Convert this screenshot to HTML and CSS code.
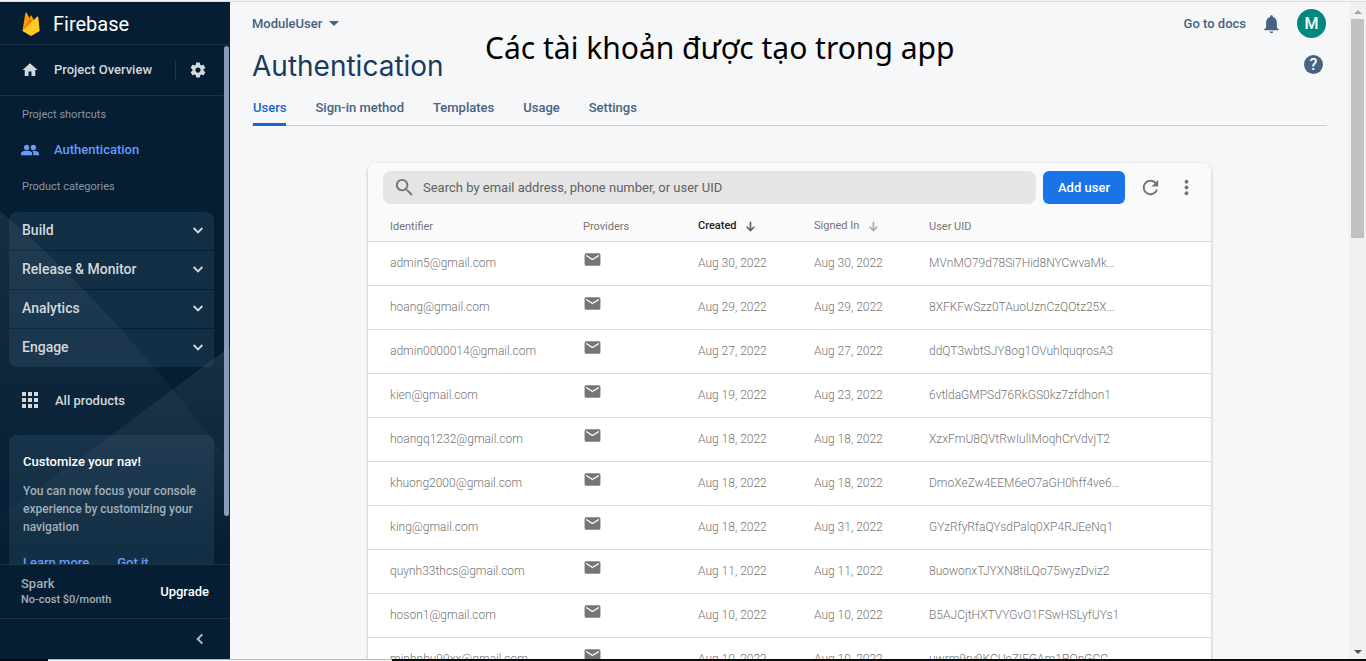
FILE: index.html
```html
<!DOCTYPE html>
<html lang="en">
<head>
<meta charset="utf-8">
<title>ModuleUser - Authentication - Firebase console</title>
<link rel="stylesheet" href="styles.css">
</head>

<body>

<!-- Icons -->
<svg class="sprite" aria-hidden="true">
    <symbol id="mail" viewBox="0 0 24 24"><path d="M20 4H4c-1.100 0-1.990.900-1.990 2L2 18c0 1.100.900 2 2 2h16c1.100 0 2-.900 2-2V6c0-1.100-.900-2-2-2zm0 4l-8 5-8-5V6l8 5 8-5v2z"/></symbol>
    <symbol id="chevron" viewBox="0 0 24 24"><path d="M5.500 9l6.500 6.500L18.500 9" fill="none" stroke="currentColor" stroke-width="2.800"/></symbol>
    <symbol id="arrow" viewBox="0 0 24 24"><path d="M12 3v16M5 12.500l7 7 7-7" fill="none" stroke="currentColor" stroke-width="3"/></symbol>
</svg>

<div class="screen">
<div class="window">

<aside class="sidebar">
    <svg class="shapes" viewBox="0 0 230 657" preserveAspectRatio="none" aria-hidden="true">
        <defs>
            <linearGradient id="fade" gradientUnits="userSpaceOnUse" x1="0" y1="210" x2="0" y2="550">
                <stop offset="0" stop-color="#fff" stop-opacity=".07"/>
                <stop offset="1" stop-color="#fff" stop-opacity="0"/>
            </linearGradient>
            <linearGradient id="fade2" gradientUnits="userSpaceOnUse" x1="0" y1="350" x2="0" y2="550">
                <stop offset="0" stop-color="#fff" stop-opacity=".08"/>
                <stop offset="1" stop-color="#fff" stop-opacity="0"/>
            </linearGradient>
        </defs>
        <path d="M0 209L43 247L82 286L120 326L172 386L230 460V560H0z" fill="url(#fade)"/>
        <path d="M230 345L118 428L0 515V560H230z" fill="url(#fade2)"/>
    </svg>

    <a class="brand" href="#">
        <svg class="flame" viewBox="0 0 18 24">
            <path d="M.5 19L3.400 1c.1-.6.900-.7 1.200-.2L7.500 6 8.700 3.800c.2-.4.800-.4 1 0L17 19z" fill="#ffa000"/>
            <path d="M.5 19L10.400 9 7.500 6z" fill="#f57c00"/>
            <path d="M.5 19L15.200 4.600c.4-.4 1-.2 1.100.4L17.700 19l-7.700 4.500c-.6.300-1.400.300-2 0z" fill="#ffca28"/>
        </svg>
        <span>Firebase</span>
    </a>

    <div class="nav-scroll">
        <div class="overview">
            <a class="nav-link" href="#">
                <svg class="icon" viewBox="0 0 24 24"><path d="M10 20v-6h4v6h5v-8h3L12 3 2 12h3v8z"/></svg>
                <span>Project Overview</span>
            </a>
            <button class="settings" aria-label="Project settings">
                <svg class="icon" viewBox="0 0 24 24"><path d="M19.430 12.980c.040-.320.070-.640.070-.980s-.030-.660-.070-.980l2.110-1.650c.190-.150.240-.420.120-.640l-2-3.460c-.120-.220-.390-.300-.610-.220l-2.490 1c-.520-.400-1.080-.730-1.690-.980l-.380-2.650C14.460 2.180 14.250 2 14 2h-4c-.250 0-.460.180-.490.420l-.380 2.650c-.610.250-1.170.590-1.690.980l-2.490-1c-.230-.090-.490 0-.610.220l-2 3.460c-.130.220-.070.490.120.640l2.110 1.650c-.040.320-.070.650-.070.980s.030.660.070.980l-2.110 1.650c-.190.150-.240.420-.120.640l2 3.460c.120.220.390.300.610.220l2.490-1c.520.400 1.080.730 1.690.980l.380 2.650c.030.240.240.420.490.420h4c.250 0 .460-.180.490-.420l.380-2.650c.610-.250 1.170-.590 1.690-.980l2.490 1c.230.090.490 0 .610-.220l2-3.460c.120-.220.070-.490-.120-.640zM12 15.500c-1.930 0-3.500-1.570-3.500-3.500s1.570-3.500 3.500-3.500 3.500 1.570 3.500 3.500-1.570 3.500-3.500 3.500z"/></svg>
            </button>
        </div>

        <p class="nav-label">Project shortcuts</p>
        <a class="nav-link active" href="#">
            <svg class="icon" viewBox="0 0 24 24"><circle cx="7.500" cy="8.500" r="3.500"/><circle cx="16.500" cy="8.500" r="3.500"/><path d="M0 19v-2.500C0 14 5 13 7.500 13s7.500 1 7.500 3.500V19zM16.500 19v-2.500c0-1.400-.700-2.500-1.700-3.300.6-.1 1.200-.2 1.700-.2 2.500 0 7.500 1 7.500 3.500V19z"/></svg>
            <span>Authentication</span>
        </a>
        <p class="nav-label">Product categories</p>

        <div class="categories">
            <button>Build <svg class="icon"><use href="#chevron"/></svg></button>
            <button>Release &amp; Monitor <svg class="icon"><use href="#chevron"/></svg></button>
            <button>Analytics <svg class="icon"><use href="#chevron"/></svg></button>
            <button>Engage <svg class="icon"><use href="#chevron"/></svg></button>
        </div>

        <a class="nav-link products" href="#">
            <svg class="icon" viewBox="0 0 16 16"><path d="M0 0h4v4H0zM6 0h4v4H6zM12 0h4v4h-4zM0 6h4v4H0zM6 6h4v4H6zM12 6h4v4h-4zM0 12h4v4H0zM6 12h4v4H6zM12 12h4v4h-4z"/></svg>
            <span>All products</span>
        </a>

        <div class="promo">
            <h2>Customize your nav!</h2>
            <p>You can now focus your console experience by customizing your navigation</p>
            <div class="promo-links">
                <a href="#">Learn more</a>
                <a href="#">Got it</a>
            </div>
        </div>
        <div class="nav-thumb"></div>
    </div>

    <div class="plan">
        <div>
            <p class="plan-name">Spark</p>
            <p class="plan-cost">No-cost $0/month</p>
        </div>
        <a href="#">Upgrade</a>
    </div>
    <div class="collapse">
        <button aria-label="Collapse menu"><svg class="icon" viewBox="0 0 24 24"><path d="M15.500 5L8.500 12l7 7" fill="none" stroke="currentColor" stroke-width="3"/></svg></button>
    </div>
</aside>

<main class="main">
    <header class="topbar">
        <button class="project">ModuleUser <span class="caret"></span></button>
        <div class="tools">
            <a href="#">Go to docs</a>
            <button aria-label="Notifications"><svg class="bell" viewBox="0 0 16 20"><path d="M8 20c1.100 0 2-.8 2-1.800H6c0 1 .9 1.800 2 1.800zM14 14V8.500c0-3-1.700-5.500-4.500-6.200v-.6a1.500 1.500 0 0 0-3 0v.6C3.700 3 2 5.500 2 8.500V14l-2 2v1h16v-1z"/></svg></button>
            <button class="avatar">M</button>
        </div>
    </header>
    <div class="heading">
        <h1>Authentication</h1>
        <button class="help" aria-label="Help">?</button>
    </div>
    <p class="note">Các tài khoản được tạo trong app</p>

    <nav class="tabs">
        <a class="current" href="#">Users</a>
        <a href="#">Sign-in method</a>
        <a href="#">Templates</a>
        <a href="#">Usage</a>
        <a href="#">Settings</a>
    </nav>

    <section class="card">
        <div class="actions">
            <label class="search">
                <svg viewBox="0 0 24 24"><path d="M15.500 14h-.790l-.280-.270C15.410 12.590 16 11.110 16 9.500 16 5.910 13.090 3 9.500 3S3 5.910 3 9.500 5.910 16 9.500 16c1.610 0 3.090-.590 4.230-1.570l.270.280v.790l5 4.990L20.490 19l-4.990-5zm-6 0C7.010 14 5 11.990 5 9.500S7.010 5 9.500 5 14 7.010 14 9.500 11.990 14 9.500 14z"/></svg>
                <input type="text" aria-label="Search users" placeholder="Search by email address, phone number, or user UID">
            </label>
            <button class="add">Add user</button>
            <button class="tool" aria-label="Refresh"><svg viewBox="0 0 24 24"><path d="M17.650 6.350C16.200 4.900 14.210 4 12 4c-4.420 0-7.990 3.580-7.990 8s3.570 8 7.990 8c3.730 0 6.840-2.550 7.730-6h-2.080c-.820 2.330-3.040 4-5.650 4-3.310 0-6-2.690-6-6s2.690-6 6-6c1.660 0 3.140.690 4.220 1.780L13 11h7V4l-2.350 2.350z"/></svg></button>
            <button class="tool" aria-label="More"><svg viewBox="0 0 24 24"><circle cx="12" cy="6" r="2"/><circle cx="12" cy="12" r="2"/><circle cx="12" cy="18" r="2"/></svg></button>
        </div>

        <table>
            <thead>
                <tr>
                    <th class="col-id">Identifier</th>
                    <th class="col">Providers</th>
                    <th class="col sorted">Created <svg><use href="#arrow"/></svg></th>
                    <th class="col">Signed In <svg><use href="#arrow"/></svg></th>
                    <th>User UID</th>
                </tr>
            </thead>
            <tbody>
                <tr><td>admin5@gmail.com</td><td><svg><use href="#mail"/></svg></td><td>Aug 30, 2022</td><td>Aug 30, 2022</td><td>MVnMO79d78Si7Hid8NYCwvaMk…</td></tr>
                <tr><td>hoang@gmail.com</td><td><svg><use href="#mail"/></svg></td><td>Aug 29, 2022</td><td>Aug 29, 2022</td><td>8XFKFwSzz0TAuoUznCzQOtz25X…</td></tr>
                <tr><td>admin0000014@gmail.com</td><td><svg><use href="#mail"/></svg></td><td>Aug 27, 2022</td><td>Aug 27, 2022</td><td>ddQT3wbtSJY8og1OVuhlquqrosA3</td></tr>
                <tr><td>kien@gmail.com</td><td><svg><use href="#mail"/></svg></td><td>Aug 19, 2022</td><td>Aug 23, 2022</td><td>6vtldaGMPSd76RkGS0kz7zfdhon1</td></tr>
                <tr><td>hoangq1232@gmail.com</td><td><svg><use href="#mail"/></svg></td><td>Aug 18, 2022</td><td>Aug 18, 2022</td><td>XzxFmU8QVtRwIulIMoqhCrVdvjT2</td></tr>
                <tr><td>khuong2000@gmail.com</td><td><svg><use href="#mail"/></svg></td><td>Aug 18, 2022</td><td>Aug 18, 2022</td><td>DmoXeZw4EEM6eO7aGH0hff4ve6…</td></tr>
                <tr><td>king@gmail.com</td><td><svg><use href="#mail"/></svg></td><td>Aug 18, 2022</td><td>Aug 31, 2022</td><td>GYzRfyRfaQYsdPalq0XP4RJEeNq1</td></tr>
                <tr><td>quynh33thcs@gmail.com</td><td><svg><use href="#mail"/></svg></td><td>Aug 11, 2022</td><td>Aug 11, 2022</td><td>8uowonxTJYXN8tiLQo75wyzDviz2</td></tr>
                <tr><td>hoson1@gmail.com</td><td><svg><use href="#mail"/></svg></td><td>Aug 10, 2022</td><td>Aug 10, 2022</td><td>B5AJCjtHXTVYGvO1FSwHSLyfUYs1</td></tr>
                <tr><td>minhphu99xx@gmail.com</td><td><svg><use href="#mail"/></svg></td><td>Aug 10, 2022</td><td>Aug 10, 2022</td><td>uwrm9ry9KCUeZIFGAm1ROnGCC</td></tr>
            </tbody>
        </table>
    </section>
</main>

<div class="scrollbar">
    <span class="up"></span>
    <div class="thumb"></div>
    <span class="down"></span>
</div>

</div>
<div class="taskbar"><span class="dark start"></span><span class="light"></span><span class="dark rest"></span></div>
</div>

</body>
</html>
```

FILE: styles.css
```css
* {
    box-sizing: border-box;
}

body {
    margin: 0;
    font-family: Roboto, sans-serif;
    font-size: 13px;
    background: #f6f7f9;
}

h1, h2, p {
    margin: 0;
}

a {
    color: inherit;
    text-decoration: none;
}

button {
    font: inherit;
    color: inherit;
    background: none;
    border: none;
    padding: 0;
    cursor: pointer;
}

svg {
    display: block;
    fill: currentColor;
}

.sprite {
    display: none;
}

.screen {
    display: flex;
    flex-direction: column;
    height: 100vh;
    overflow: hidden;
}

.window {
    flex: 1;
    display: flex;
    min-height: 0;
    margin-top: 1px;
    border-top: 1px solid #d9dbde;
}

/* Sidebar */

.sidebar {
    position: relative;
    display: flex;
    flex-direction: column;
    width: 230px;
    background: #051e34;
    color: #d3d8dc;
}

.shapes {
    position: absolute;
    inset: 0;
    width: 100%;
    height: 100%;
}

.brand {
    position: relative;
    display: flex;
    align-items: center;
    gap: 13px;
    height: 43px;
    padding-top: 1px;
    padding-left: 22px;
    border-bottom: 1px solid #1e3549;
    color: #fff;
    font-size: 20px;
}

.flame {
    width: 18px;
    height: 24px;
}

.icon {
    width: 18px;
    height: 18px;
}

.nav-scroll {
    position: relative;
    flex: 1;
    min-height: 0;
    overflow: hidden;
    padding-right: 7px;
}

.overview {
    display: flex;
    align-items: center;
    height: 51px;
    border-bottom: 1px solid #1e3549;
}

.nav-link {
    display: flex;
    align-items: center;
    flex: 1;
    gap: 15px;
    height: 36px;
    padding-left: 21px;
    font-weight: 500;
}

.overview span,
.active span {
    padding-bottom: 2px;
}

.active {
    color: #669df6;
}

.settings {
    height: 19px;
    padding: 0 16px 0 13px;
    border-left: 1px solid #1e3549;
}

.nav-label {
    height: 36px;
    padding-left: 22px;
    line-height: 38px;
    font-size: 11px;
    color: #8a97a3;
}

.categories {
    display: grid;
    gap: 1px;
    margin: 8px 9px 0;
    border-radius: 8px;
    overflow: hidden;
}

.categories button {
    display: flex;
    align-items: center;
    justify-content: space-between;
    height: 38px;
    padding: 0 8px 2px 13px;
    background: rgba(110, 160, 190, 0.13);
    font-size: 14px;
    font-weight: 500;
}

.categories .icon {
    width: 16px;
    height: 16px;
}

.products {
    margin: 15px 0 17px;
    padding-left: 22px;
    gap: 17px;
}

.products .icon {
    width: 16px;
    height: 16px;
}

.promo {
    margin: 0 9px;
    padding: 18px 14px;
    border-radius: 8px;
    background: rgba(110, 160, 190, 0.13);
    font-size: 12px;
    font-weight: 500;
    line-height: 18px;
    color: #a3afb9;
}

.promo h2 {
    margin-bottom: 11px;
    font-size: 13px;
    font-weight: 500;
    color: #fff;
}

.promo-links {
    display: flex;
    gap: 28px;
    margin-top: 18px;
    font-size: 13px;
    color: #669df6;
}

.nav-thumb {
    position: absolute;
    top: 1px;
    right: 1px;
    width: 5px;
    height: 470px;
    border-radius: 3px;
    background: #8c9bb5;
}

.plan {
    position: relative;
    display: flex;
    align-items: center;
    justify-content: space-between;
    height: 54px;
    padding: 0 21px;
    border-top: 1px solid #1e3549;
    background: #051e34;
    font-weight: 500;
    line-height: 16px;
    color: #a3afb9;
}

.plan a {
    color: #fff;
}

.plan-cost {
    font-size: 11px;
}

.collapse {
    position: relative;
    display: flex;
    align-items: center;
    justify-content: flex-end;
    height: 41px;
    padding-right: 22px;
    border-top: 1px solid #1e3549;
    background: #051e34;
    color: #b4bec6;
}

.collapse .icon {
    width: 16px;
    height: 16px;
}

/* Main area */

.main {
    position: relative;
    flex: 1;
    min-width: 0;
    overflow: hidden;
    padding: 0 22px;
    color: #476282;
    font-weight: 500;
}

.topbar {
    display: flex;
    align-items: center;
    justify-content: space-between;
    height: 43px;
}

.project {
    display: flex;
    align-items: center;
    gap: 7px;
}

.caret {
    border: 5px solid transparent;
    border-top-color: #476282;
    border-bottom: none;
}

.tools {
    display: flex;
    align-items: center;
    gap: 18px;
}

.bell {
    width: 15px;
    height: 18px;
}

.avatar {
    width: 29px;
    height: 29px;
    margin-right: 1px;
    border-radius: 50%;
    background: #00897b;
    color: #fff;
    font-size: 16px;
}

.heading {
    display: flex;
    align-items: center;
    justify-content: space-between;
    height: 42px;
    padding-right: 4px;
}

h1 {
    color: #1c3a5b;
    font-family: Inter, sans-serif;
    font-size: 28px;
    font-weight: 400;
}

.help {
    width: 19px;
    height: 19px;
    margin-bottom: 4px;
    border-radius: 50%;
    background: #476282;
    color: #fff;
    font-size: 16px;
    line-height: 19px;
}

.note {
    position: absolute;
    top: 24px;
    left: 255px;
    color: #000;
    font-family: "Noto Sans", sans-serif;
    font-size: 30px;
    font-weight: 400;
    line-height: 44px;
    white-space: nowrap;
}

.tabs {
    display: flex;
    gap: 29px;
    height: 39px;
    padding-left: 1px;
    border-bottom: 1px solid #c1cedb;
    line-height: 41px;
}

.tabs a {
    height: 39px;
}

.tabs .current {
    border-bottom: 3px solid #1967d2;
    border-radius: 2px 2px 0 0;
    color: #1967d2;
}

.card {
    max-width: 843px;
    margin: 37px auto 0;
    border-radius: 8px;
    background: #fff;
    box-shadow: 0 1px 3px rgba(0, 0, 0, 0.3);
    color: #757575;
    overflow: hidden;
}

.actions {
    display: flex;
    align-items: center;
    gap: 7px;
    height: 49px;
    padding: 0 10px 0 15px;
    background: #fafafa;
}

.search {
    display: flex;
    align-items: center;
    flex: 1;
    gap: 7px;
    height: 33px;
    padding-left: 10px;
    border-radius: 8px;
    background: #e5e5e5;
}

.search svg {
    width: 23px;
    height: 23px;
}

.search input {
    flex: 1;
    border: none;
    outline: none;
    padding: 0;
    background: none;
    font: inherit;
    font-weight: 400;
}

.search input::placeholder {
    color: #616161;
}

.add {
    width: 82px;
    height: 33px;
    margin-right: 4px;
    border-radius: 6px;
    background: #1a73e8;
    color: #fff;
}

.tool {
    display: flex;
    justify-content: center;
    width: 29px;
}

.tool svg {
    width: 23px;
    height: 23px;
}

table {
    width: 100%;
    table-layout: fixed;
    border-collapse: collapse;
    text-align: left;
}

th {
    height: 29px;
    padding: 0;
    background: #fafafa;
    border-bottom: 1px solid #dcdcdc;
    font-size: 11px;
    font-weight: 400;
}

th svg {
    display: inline-block;
    width: 13px;
    height: 13px;
    margin-left: 5px;
    vertical-align: middle;
    opacity: 0.6;
}

.col-id {
    width: 215px;
}

.col {
    width: 115px;
}

.sorted {
    width: 116px;
    color: #212121;
    font-weight: 500;
}

.sorted svg {
    opacity: 1;
    color: #616161;
}

td {
    height: 44px;
    padding: 0;
    border-bottom: 1px solid #dcdcdc;
    font-size: 12px;
    font-weight: 300;
}

th:first-child,
td:first-child {
    padding-left: 22px;
}

td svg {
    width: 19px;
    height: 19px;
    margin-bottom: 7px;
}

/* Window scrollbar and the strip under it */

.scrollbar {
    display: flex;
    flex-direction: column;
    align-items: center;
    width: 17px;
    padding: 8px 0 5px;
    background: #f1f1f1;
}

.up {
    border: 4px solid transparent;
    border-top: none;
    border-bottom-color: #a3a3a3;
}

.down {
    margin-top: auto;
    border: 4px solid transparent;
    border-bottom: none;
    border-top-color: #505050;
}

.thumb {
    width: 13px;
    height: 219px;
    margin-top: 5px;
    background: #c1c1c1;
}

.taskbar {
    display: flex;
    height: 2px;
}

.dark {
    background: #0b0b0e;
}

.start {
    width: 48px;
}

.light {
    width: 344px;
    border-top: 1px solid #b9b9b9;
    background: #f6f7f9;
}

.rest {
    flex: 1;
}
```
